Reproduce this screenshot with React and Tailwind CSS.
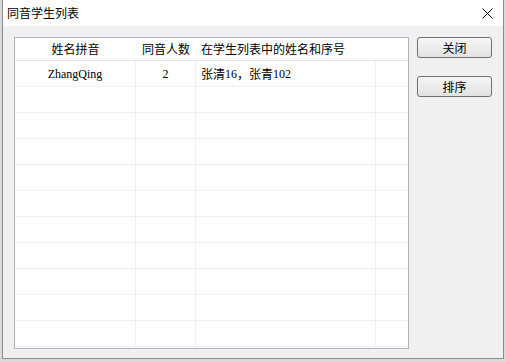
import React from 'react';

const cjk = { fontFamily: '"Noto Sans CJK SC", "Noto Sans", sans-serif' };
const serif = { fontFamily: '"Liberation Serif", "Noto Sans CJK SC", serif' };

const rows = [
  { pinyin: 'ZhangQing', count: '2', names: ['张清', '16', '，张青', '102'] },
  ...Array.from({ length: 10 }, () => null),
];

const Button = ({ children, className = '' }) => (
  <button
    className={`w-[75px] h-[21px] rounded-[3px] border border-[#707070] bg-gradient-to-b from-[#f6f6f6] to-[#e2e2e2] text-[12px] leading-none text-black ${className}`}
    style={cjk}
  >
    {children}
  </button>
);

const Header = () => (
  <div className="flex h-[23px] border-b border-[#e5e5e5] bg-white text-[12px] text-black" style={cjk}>
    <div className="w-[121px] flex items-center justify-center">姓名拼音</div>
    <div className="w-[60px] flex items-center justify-center">同音人数</div>
    <div className="w-[180px] flex items-center pl-[5px]">在学生列表中的姓名和序号</div>
    <div className="flex-1" />
  </div>
);

const Row = ({ row }) => (
  <div className="flex h-[26px] border-b border-[#f0f0f0] text-[12px] text-black">
    <div className="w-[121px] border-r border-[#f0f0f0] flex items-center justify-center" style={serif}>
      {row ? row.pinyin : ''}
    </div>
    <div className="w-[60px] border-r border-[#f0f0f0] flex items-center justify-center" style={serif}>
      {row ? row.count : ''}
    </div>
    <div className="w-[180px] border-r border-[#f0f0f0] flex items-center pl-[5px]">
      {row && (
        <>
          <span style={cjk}>{row.names[0]}</span>
          <span style={serif}>{row.names[1]}</span>
          <span style={cjk}>{row.names[2]}</span>
          <span style={serif}>{row.names[3]}</span>
        </>
      )}
    </div>
    <div className="flex-1" />
  </div>
);

export default function App() {
  return (
    <div className="w-[506px] h-[362px] bg-[#d9d9d9] pl-[2px] overflow-hidden">
      <div className="w-[502px] h-[359px] flex flex-col border-l border-r border-b border-[#8c8c8c] bg-[#f0f0f0]">
        <div className="h-[26px] bg-white flex items-center justify-between pl-[4px] pr-[10px]">
          <span className="text-[12px] text-black" style={cjk}>同音学生列表</span>
          <svg width="11" height="11" viewBox="0 0 11 11">
            <path d="M0.5 0.5 L10.5 10.5 M10.5 0.5 L0.5 10.5" stroke="#000" strokeWidth="1" />
          </svg>
        </div>
        <div className="flex pl-[11px] pt-[11px] gap-[8px]">
          <div className="w-[395px] h-[312px] border border-[#a9b5c1] bg-white overflow-hidden">
            <Header />
            {rows.map((r, i) => (
              <Row key={i} row={r} />
            ))}
          </div>
          <div className="flex flex-col gap-[18px]">
            <Button>关闭</Button>
            <Button>排序</Button>
          </div>
        </div>
      </div>
    </div>
  );
}
